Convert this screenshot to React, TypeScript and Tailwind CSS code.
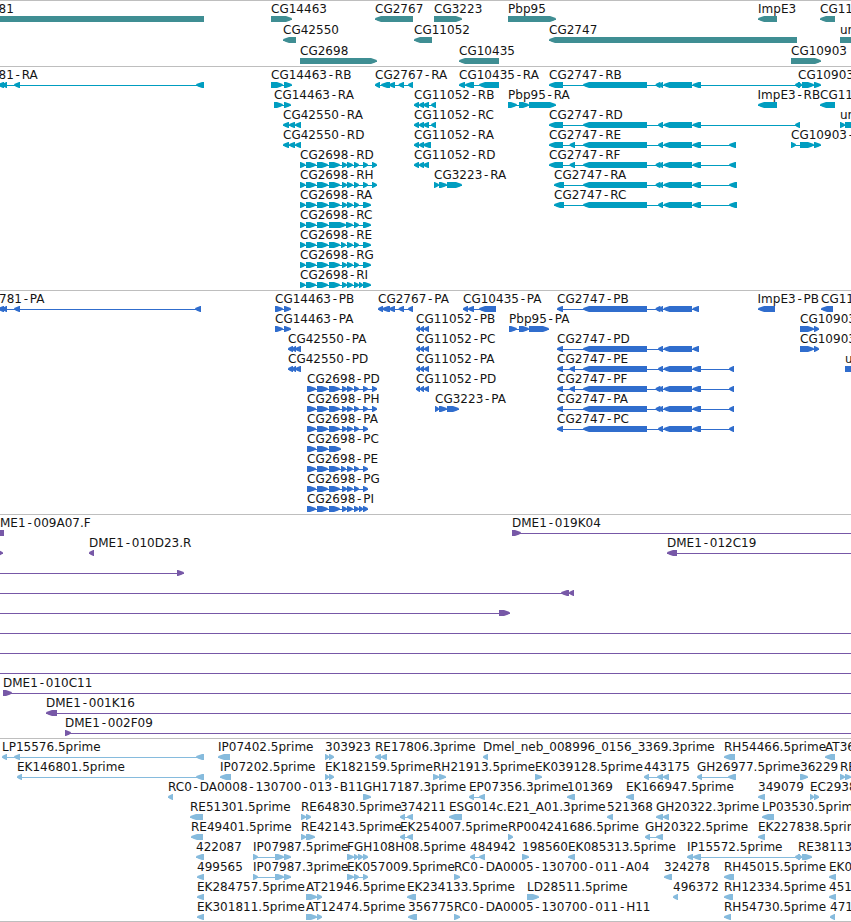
type Strand = "+" | "-";

type Feature = {
  /** Empty for features whose label is outside the visible range. */
  label: string;
  strand: Strand;
  exons: number[][];
  /** Where the connector ends, when it runs past the exons. */
  line?: number[];
  labelX?: number;
};

type TrackData = {
  name: string;
  color: string;
  height: number;
  rowHeight: number;
  rows: Feature[][];
};

const VIEW_WIDTH = 851;
const BASELINE = 12;
const BAR_TOP = 15;
const BAR_HEIGHT = 6;

function f(
  label: string,
  strand: Strand,
  exons: number[][],
  line?: number[],
  labelX?: number,
): Feature {
  return { label, strand, exons, line, labelX };
}

const GENES: Feature[][] = [
  [
    f("81", "-", [[-20, 204]], undefined, -1.5),
    f("CG14463", "+", [[271, 292]]),
    f("CG2767", "-", [[375, 413]]),
    f("CG3223", "+", [[434, 462]]),
    f("Pbp95", "+", [[508, 556]]),
    f("ImpE3", "-", [[758, 777]]),
    f("CG11", "-", [[820, 835]]),
  ],
  [
    f("CG42550", "-", [[283, 296]]),
    f("CG11052", "-", [[414, 432]]),
    f("CG2747", "-", [[549, 797]]),
    f("un", "+", [[840, 870]]),
  ],
  [
    f("CG2698", "+", [[300, 377]]),
    f("CG10435", "-", [[459, 499]]),
    f("CG10903", "+", [[791, 821]]),
  ],
];

// Exon runs shared by several isoforms
const R2698 = [[300, 305.5], [306, 316], [317, 328], [329, 340]];
const P2698 = [[307, 316], [317, 328], [329, 340]];
const MID2698 = [[342, 347], [347, 353], [354, 359]];
const LONG2698 = [...MID2698, [363, 368], [372, 377]];
const R11052 = [[414, 419], [419, 424], [423, 429]];
const P11052 = [[416, 420], [420, 424], [424, 429]];
const R42550 = [[283, 289], [289, 295], [295, 301]];
const P42550 = [[288, 293], [292, 296], [295, 301]];
const BIG2747 = [[583, 647]];
const ONE2747 = [[658, 663], [663.5, 692]];
const TWO2747 = [[655.5, 660.5], [659, 663], [663.5, 692]];

const TRANSCRIPTS: Feature[][] = [
  [
    f("81-RA", "-", [[-2, 4], [2, 7], [14, 20], [196, 204]], undefined, -1.5),
    f("CG14463-RB", "+", [[271, 283], [284, 292]]),
    f("CG2767-RA", "-", [[375, 380], [381, 390], [389, 395], [398.5, 404], [408, 413]]),
    f("CG10435-RA", "-", [[459, 465], [465, 474], [479, 499]]),
    f("CG2747-RB", "-", [[549, 563], ...BIG2747, ...TWO2747, [692.5, 701], [795, 800]]),
    f("CG10903", "+", [[798, 802], [802, 814], [814, 821]]),
  ],
  [
    f("CG14463-RA", "+", [[274, 283], [284, 291]]),
    f("CG11052-RB", "-", [...R11052, [431, 436]]),
    f("Pbp95-RA", "+", [[508, 517], [519, 529], [529, 556]]),
    f("ImpE3-RB", "-", [[758, 777]], undefined, 757.5),
    f("CG11", "-", [[820, 835]]),
  ],
  [
    f("CG42550-RA", "-", R42550),
    f("CG11052-RC", "-", [...R11052, [431, 436]]),
    f("CG2747-RD", "-", [[549, 563], ...BIG2747, ...ONE2747, [692.5, 701], [795, 800]]),
    f("un", "+", [[840, 845], [845, 870]]),
  ],
  [
    f("CG42550-RD", "-", R42550),
    f("CG11052-RA", "-", [[414, 419], [419, 424], [423, 431]]),
    f("CG2747-RE", "-", [[549, 563], [569.5, 575], ...BIG2747, ...ONE2747, [692.5, 701], [729, 736]]),
    f("CG10903-", "+", [[791, 796], [800, 814], [814, 821]]),
  ],
  [
    f("CG2698-RD", "+", [...R2698, ...LONG2698]),
    f("CG11052-RD", "-", R11052),
    f("CG2747-RF", "-", [[549, 563], [569.5, 575], ...BIG2747, ...TWO2747, [692.5, 701], [729, 736]]),
  ],
  [
    f("CG2698-RH", "+", [...R2698, ...LONG2698]),
    f("CG3223-RA", "+", [[434, 439], [439, 447], [447, 462]]),
    f("CG2747-RA", "-", [[554, 564], ...BIG2747, ...TWO2747, [692.5, 701], [729, 737]]),
  ],
  [
    f("CG2698-RA", "+", [...R2698, ...MID2698, [363, 371]]),
    f("CG2747-RC", "-", [[554, 564], ...BIG2747, ...ONE2747, [692.5, 701], [729, 737]]),
  ],
  [f("CG2698-RC", "+", [[300, 305.5], [306, 316], [317, 328], [329, 346], [346, 353], [354, 359], [363, 371]])],
  [f("CG2698-RE", "+", [...R2698, [341, 346], ...MID2698.slice(1), [363, 371]])],
  [f("CG2698-RG", "+", [...R2698, ...MID2698, [363, 371]])],
  [f("CG2698-RI", "+", [...R2698, ...MID2698, [359, 363], [363, 371]])],
];

const PROTEINS: Feature[][] = [
  [
    f("781-PA", "-", [[-2, 4], [2, 7], [14, 20], [195, 201]], undefined, -1),
    f("CG14463-PB", "+", [[275, 283], [284, 291]]),
    f("CG2767-PA", "-", [[378, 383], [382, 390], [389, 395], [398.5, 404], [408, 413]]),
    f("CG10435-PA", "-", [[463, 468], [468, 474], [479, 496]]),
    f("CG2747-PB", "-", [[557, 563], ...BIG2747, ...TWO2747, [692.5, 699]]),
    f("ImpE3-PB", "-", [[758, 775]], undefined, 757.5),
    f("CG11", "-", [[821, 833]]),
  ],
  [
    f("CG14463-PA", "+", [[275, 283], [284, 291]]),
    f("CG11052-PB", "-", P11052),
    f("Pbp95-PA", "+", [[509, 517], [519, 529], [529, 549]]),
    f("CG10903", "+", [[800, 814], [814, 819]]),
  ],
  [
    f("CG42550-PA", "-", P42550),
    f("CG11052-PC", "-", P11052),
    f("CG2747-PD", "-", [[557, 563], ...BIG2747, ...ONE2747, [692.5, 699]]),
    f("CG10903", "+", [[800, 814], [814, 819]]),
  ],
  [
    f("CG42550-PD", "-", P42550),
    f("CG11052-PA", "-", P11052),
    f("CG2747-PE", "-", [[557, 563], [569.5, 575], ...BIG2747, ...ONE2747, [692.5, 701], [729, 734]]),
    f("u", "+", [[845, 870]]),
  ],
  [
    f("CG2698-PD", "+", [...P2698, ...LONG2698]),
    f("CG11052-PD", "-", P11052),
    f("CG2747-PF", "-", [[557, 563], [569.5, 575], ...BIG2747, ...TWO2747, [692.5, 701], [729, 734]]),
  ],
  [
    f("CG2698-PH", "+", [...P2698, ...LONG2698]),
    f("CG3223-PA", "+", [[435, 439], [439, 447], [447, 459]]),
    f("CG2747-PA", "-", [[557, 563], ...BIG2747, ...TWO2747, [692.5, 701], [729, 734]]),
  ],
  [
    f("CG2698-PA", "+", [...P2698, ...MID2698, [363, 368]]),
    f("CG2747-PC", "-", [[557, 563], ...BIG2747, ...ONE2747, [692.5, 701], [729, 734]]),
  ],
  [f("CG2698-PC", "+", [[307, 316], [317, 328], [329, 341]])],
  [f("CG2698-PE", "+", [...P2698, [341, 346], ...MID2698.slice(1), [363, 368]])],
  [f("CG2698-PG", "+", [...P2698, ...MID2698, [363, 368]])],
  [f("CG2698-PI", "+", [...P2698, ...MID2698, [359, 363], [363, 368]])],
];

const BACS: Feature[][] = [
  [
    f("ME1-009A07.F", "-", [[-10, 4]], undefined, 0),
    f("DME1-019K04", "+", [[512, 521]], [512, 851]),
  ],
  [
    f("", "+", [[-3, 3]]),
    f("DME1-010D23.R", "-", [[89, 94]]),
    f("DME1-012C19", "-", [[667, 677]], [667, 851]),
  ],
  [f("", "+", [[177, 184]], [0, 184])],
  [f("", "-", [[561, 569], [569, 574]], [0, 574])],
  [f("", "+", [[499, 510]], [0, 510])],
  [f("", "+", [], [0, 851])],
  [f("", "+", [], [0, 851])],
  [f("", "+", [], [0, 851])],
  [f("DME1-010C11", "+", [[3, 12]], [3, 851])],
  [f("DME1-001K16", "-", [[46, 57]], [46, 851])],
  [f("DME1-002F09", "+", [[65, 71]], [65, 851])],
];

const ESTS: Feature[][] = [
  [
    f("LP15576.5prime", "-", [[2, 7], [14, 20], [196, 204]]),
    f("IP07402.5prime", "-", [[218, 230]]),
    f("303923", "+", [[325, 329], [329, 334]]),
    f("RE17806.3prime", "-", [[375, 381], [381, 387]]),
    f("Dmel_neb_008996_0156_3369.3prime", "-", [[483, 488]]),
    f("RH54466.5prime", "-", [[724, 735]]),
    f("AT36", "-", [[825, 835]]),
  ],
  [
    f("EK146801.5prime", "-", [[17, 22], [196, 204]]),
    f("IP07202.5prime", "-", [[220, 231]]),
    f("EK182159.5prime", "+", [[325, 329], [329, 334]]),
    f("RH21913.5prime", "+", [[433, 439], [439, 446]]),
    f("EK039128.5prime", "+", [[535, 542]]),
    f("443175", "-", [[644, 649], [657, 663], [663, 669]]),
    f("GH26977.5prime", "-", [[697, 702], [728, 736]]),
    f("36229", "+", [[800, 808]]),
    f("RE", "+", [[840, 845], [845, 851]]),
  ],
  [
    f("RC0-DA0008-130700-013-B11", "-", [[168, 173]]),
    f("GH17187.3prime", "+", [[363, 371]]),
    f("EP07356.3prime", "-", [[469, 474], [479, 485]]),
    f("101369", "-", [[567, 575]]),
    f("EK166947.5prime", "-", [[626, 634]]),
    f("349079", "-", [[758, 765]]),
    f("EC2938", "+", [[810, 814], [814, 819]]),
  ],
  [
    f("RE51301.5prime", "-", [[190, 203]]),
    f("RE64830.5prime", "+", [[301, 306], [306, 311]]),
    f("374211", "-", [[400, 405], [407, 413]]),
    f("ESG014c.E21_A01.3prime", "-", [[449, 462]]),
    f("521368", "-", [[607, 613]]),
    f("GH20322.3prime", "-", [[656, 663], [663, 669]]),
    f("LP03530.5prime", "-", [[762, 774]]),
  ],
  [
    f("RE49401.5prime", "-", [[191, 203]]),
    f("RE42143.5prime", "+", [[301, 306], [306, 315]]),
    f("EK254007.5prime", "-", [[400, 405], [407, 413]]),
    f("RP004241686.5prime", "+", [[508, 513]]),
    f("GH20322.5prime", "-", [[645, 650], [656, 663]]),
    f("EK227838.5prime", "-", [[758, 765]]),
  ],
  [
    f("422087", "-", [[196, 204]]),
    f("IP07987.5prime", "+", [[253, 258], [275, 284], [284, 291]]),
    f("FGH108H08.5prime", "+", [[347, 354], [354, 358], [358, 363], [363, 368]]),
    f("484942", "-", [[470, 475], [479, 485]]),
    f("198560", "+", [[522, 529]]),
    f("EK085313.5prime", "-", [[568, 575]]),
    f("IP15572.5prime", "-", [[687, 693], [693, 701], [795, 800]]),
    f("RE38113", "+", [[798, 802], [802, 812]]),
  ],
  [
    f("499565", "-", [[197, 204]]),
    f("IP07987.3prime", "+", [[253, 258], [275, 284], [284, 291]]),
    f("EK057009.5prime", "+", [[347, 354], [354, 359], [363, 368]]),
    f("RC0-DA0005-130700-011-A04", "+", [[454, 460]]),
    f("324278", "-", [[664, 672]]),
    f("RH45015.5prime", "-", [[724, 734]]),
    f("EK0", "-", [[829, 836]]),
  ],
  [
    f("EK284757.5prime", "-", [[197, 204]]),
    f("AT21946.5prime", "+", [[306, 317], [317, 322]]),
    f("EK234133.5prime", "-", [[407, 416]]),
    f("LD28511.5prime", "+", [[527, 539]]),
    f("496372", "-", [[673, 678]]),
    f("RH12334.5prime", "-", [[724, 733]]),
    f("451", "-", [[829, 836]]),
  ],
  [
    f("EK301811.5prime", "-", [[197, 204]]),
    f("AT12474.5prime", "+", [[306, 317], [317, 322]]),
    f("356775", "-", [[408, 417]]),
    f("RC0-DA0005-130700-011-H11", "+", [[454, 460]]),
    f("RH54730.5prime", "-", [[724, 731]]),
    f("471", "-", [[830, 835]]),
  ],
];

const TRACKS: TrackData[] = [
  { name: "Genes", color: "#3f8e93", height: 65, rowHeight: 21, rows: GENES },
  { name: "Transcripts", color: "#009dc0", height: 223, rowHeight: 20, rows: TRANSCRIPTS },
  { name: "Proteins", color: "#306dcd", height: 223, rowHeight: 20, rows: PROTEINS },
  { name: "BACs", color: "#7758a7", height: 223, rowHeight: 20, rows: BACS },
  { name: "ESTs", color: "#86bbdd", height: 182, rowHeight: 20, rows: ESTS },
];

/** A block with a rounded-off point in the direction of the strand. */
function exonPoints([start, end]: number[], strand: Strand, top: number) {
  const head = Math.min(6, (end - start) * 0.85);
  const bottom = top + BAR_HEIGHT;
  const dir = strand === "+" ? 1 : -1;
  const tail = strand === "+" ? start : end;
  const tip = strand === "+" ? end : start;
  const neck = tip - dir * head;
  const mid = tip - dir * head * 0.4;
  return [
    [tail, top],
    [neck, top],
    [mid, top + 1.2],
    [tip, top + 2.4],
    [tip, bottom - 2.4],
    [mid, bottom - 1.2],
    [neck, bottom],
    [tail, bottom],
  ]
    .map((p) => p.join(","))
    .join(" ");
}

/** Extra room on both sides of every hyphen. */
function hyphenSpacing(label: string) {
  return [...label].map((c, i) => (c === "-" || label[i - 1] === "-" ? 1.8 : 0)).join(" ");
}

function FeatureGlyph({ feature, y }: { feature: Feature; y: number }) {
  const { label, strand, exons, line, labelX } = feature;
  const top = y + BAR_TOP;
  const [from, to] = line ?? [exons[0][0], exons[exons.length - 1][1]];

  return (
    <g>
      <rect x={from} y={top + 3} width={to - from} height={1} />
      {exons.map((exon, i) => (
        <polygon key={i} points={exonPoints(exon, strand, top)} />
      ))}
      {label && (
        <text
          x={labelX ?? exons[0][0]}
          y={y + BASELINE}
          dx={hyphenSpacing(label)}
          className="fill-[#141414]"
        >
          {label}
        </text>
      )}
    </g>
  );
}

function Track({ track }: { track: TrackData }) {
  return (
    <section className="border-t border-[#bebebe]" aria-label={track.name}>
      <svg
        className="block font-['DejaVu_Sans',sans-serif] text-[12px]"
        width={VIEW_WIDTH}
        height={track.height}
        fill={track.color}
      >
        {track.rows.map((row, r) =>
          row.map((feature, i) => (
            <FeatureGlyph key={`${r}-${i}`} feature={feature} y={r * track.rowHeight} />
          )),
        )}
      </svg>
    </section>
  );
}

export default function App() {
  return (
    <main className="flex h-[922px] w-[851px] flex-col overflow-hidden border-b border-[#bebebe] bg-white">
      {TRACKS.map((track) => (
        <Track key={track.name} track={track} />
      ))}
    </main>
  );
}
